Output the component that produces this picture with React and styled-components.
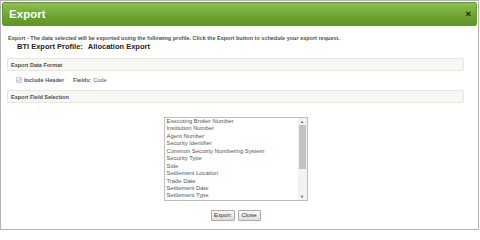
import React from "react";
import styled, { createGlobalStyle } from "styled-components";

const Global = createGlobalStyle`
  html, body { margin: 0; padding: 0; background: #fff; }
  body { font-family: "Liberation Sans", Arial, sans-serif; }
  * { box-sizing: border-box; }
`;

const Dialog = styled.div`
  width: 479px;
  height: 230px;
  border: 1px solid #b4b4b4;
  padding: 1px;
  display: flex;
  flex-direction: column;
  background: #fff;
`;

const Header = styled.div`
  height: 24px;
  display: flex;
  align-items: center;
  justify-content: space-between;
  padding: 0 5px 0 6px;
  background: linear-gradient(#8ec153, #6ea531 55%, #5e9626);
  border: 1px solid #62992a;
  border-radius: 2px;
`;

const Title = styled.span`
  color: #fff;
  font-weight: bold;
  font-size: 11.4px;
  letter-spacing: 0.1px;
`;

const CloseX = styled.span`
  color: #1a1a1a;
  font-weight: bold;
  font-size: 9.5px;
  line-height: 8px;
`;

const Content = styled.div`
  padding: 0 13px 0 5px;
  display: flex;
  flex-direction: column;
`;

const Description = styled.div`
  margin-top: 8px;
  padding-left: 1px;
  height: 8px;
  line-height: 8px;
  font-size: 5.5px;
  font-weight: bold;
  color: #505050;
  white-space: nowrap;
`;

const ProfileLine = styled.div`
  height: 10px;
  line-height: 10px;
  padding-left: 10px;
  font-size: 7.5px;
  font-weight: bold;
  color: #222;
  display: flex;
  gap: 5px;
`;

const SectionBar = styled.div`
  margin-top: ${(p) => p.$mt}px;
  height: 13px;
  display: flex;
  align-items: center;
  padding-left: 3px;
  background: #f7f7f3;
  border: 1px solid #e7e7e0;
  border-radius: 2px;
  font-size: 5.5px;
  font-weight: bold;
  color: #4a4a4a;
`;

const OptionRow = styled.div`
  margin-top: 4px;
  height: 10px;
  display: flex;
  align-items: center;
  padding-left: 9px;
  font-size: 5.6px;
  color: #555;
`;

const Check = styled.span`
  width: 6px;
  height: 6px;
  border: 1px solid #c8c8c8;
  border-radius: 1px;
  background: #f4f4f4;
  display: inline-flex;
  align-items: center;
  justify-content: center;
  margin-right: 2px;
`;

const OptLabel = styled.span`
  font-weight: bold;
  margin-right: ${(p) => p.$mr || 0}px;
`;

const ListWrap = styled.div`
  margin-top: 14px;
  align-self: center;
  width: 144px;
  height: 84px;
  border: 1px solid #bdbdbd;
  display: flex;
  background: #fff;
`;

const Items = styled.div`
  flex: 1;
  padding: 0 0 0 2px;
  overflow: hidden;
`;

const Item = styled.div`
  height: 7.45px;
  line-height: 7.45px;
  font-size: 5.85px;
  color: #555;
  white-space: nowrap;
`;

const Scrollbar = styled.div`
  width: 9px;
  display: flex;
  flex-direction: column;
  align-items: center;
  background: #f2f2f2;
  padding: 0 1px;
`;

const Arrow = styled.div`
  height: 7px;
  width: 100%;
  display: flex;
  align-items: center;
  justify-content: center;
  font-size: 4px;
  color: #555;
`;

const Thumb = styled.div`
  width: 100%;
  height: 44px;
  background: #c1c1c1;
`;

const Spacer = styled.div`
  flex: 1;
`;

const Buttons = styled.div`
  margin-top: 9px;
  display: flex;
  justify-content: center;
  gap: 3px;
`;

const Button = styled.button`
  height: 11px;
  width: ${(p) => p.$w}px;
  padding: 0;
  font-family: "Liberation Sans", Arial, sans-serif;
  font-size: 5.8px;
  color: #333;
  background: linear-gradient(#f8f8f8, #dedede);
  border: 1px solid #a9a9a9;
  border-radius: 1px;
  line-height: 9px;
`;

const fields = [
  "Executing Broker Number",
  "Institution Number",
  "Agent Number",
  "Security Identifier",
  "Common Security Numbering System",
  "Security Type",
  "Side",
  "Settlement Location",
  "Trade Date",
  "Settlement Date",
  "Settlement Type",
];

export default function App() {
  return (
    <>
      <Global />
      <Dialog>
        <Header>
          <Title>Export</Title>
          <CloseX>×</CloseX>
        </Header>
        <Content>
          <Description>
            Export - The data selected will be exported using the following profile. Click the Export button to schedule your export request.
          </Description>
          <ProfileLine>
            <span>BTI Export Profile:</span>
            <span>Allocation Export</span>
          </ProfileLine>
          <SectionBar $mt={6}>Export Data Format</SectionBar>
          <OptionRow>
            <Check>
              <svg width="4" height="4" viewBox="0 0 4 4">
                <path d="M0.5 2 L1.6 3.2 L3.5 0.6" stroke="#9a9a9a" strokeWidth="0.7" fill="none" />
              </svg>
            </Check>
            <OptLabel $mr={9}>Include Header</OptLabel>
            <OptLabel $mr={2}>Fields:</OptLabel>
            <span>Code</span>
          </OptionRow>
          <SectionBar $mt={5}>Export Field Selection</SectionBar>
          <ListWrap>
            <Items>
              {fields.map((f) => (
                <Item key={f}>{f}</Item>
              ))}
            </Items>
            <Scrollbar>
              <Arrow>▲</Arrow>
              <Thumb />
              <Spacer />
              <Arrow>▼</Arrow>
            </Scrollbar>
          </ListWrap>
          <Buttons>
            <Button $w={24}>Export</Button>
            <Button $w={23}>Close</Button>
          </Buttons>
        </Content>
      </Dialog>
    </>
  );
}
